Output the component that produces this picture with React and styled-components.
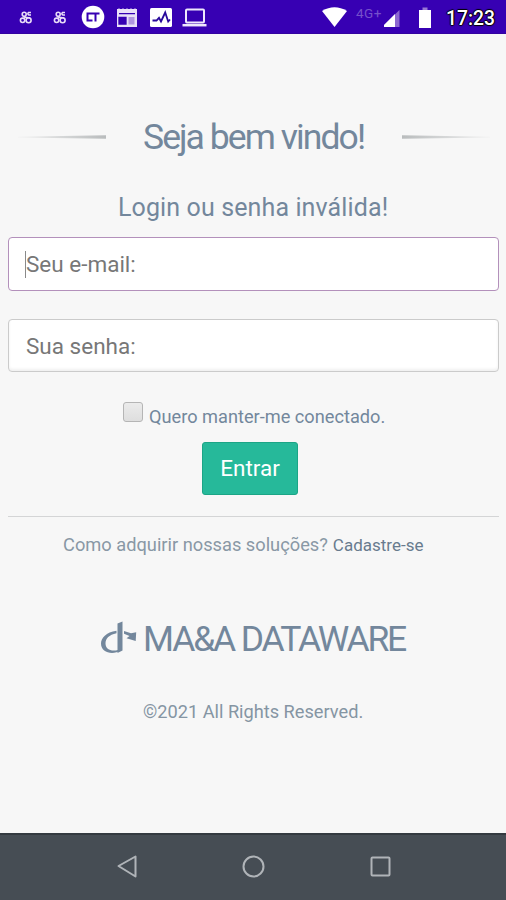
import React from "react";
import styled, { createGlobalStyle } from "styled-components";

const GlobalStyle = createGlobalStyle`
  * { box-sizing: border-box; }
  body { margin: 0; background: #f7f7f7; font-family: Roboto, "Liberation Sans", sans-serif; }
`;

const Screen = styled.div`
  display: flex;
  flex-direction: column;
  width: 506px;
  height: 900px;
  overflow: hidden;
  background: #f7f7f7;
  color: #73879c;
`;

const StatusBar = styled.header`
  display: flex;
  justify-content: space-between;
  height: 34px;
  flex: none;
  background: #3700b3;
  border-bottom: 1px solid #3303a0;
`;

const StatusIcons = styled.svg`
  display: block;
  height: 33px;
  width: ${(p) => p.$width}px;
`;

const StatusRight = styled.div`
  display: flex;
  padding-right: 10px;
`;

const Network = styled.span`
  width: 28px;
  margin: 6px 0 0 9px;
  font-size: 13.5px;
  line-height: 15px;
  letter-spacing: 0.5px;
  color: #7650cb;
  white-space: nowrap;
`;

const Clock = styled.time`
  margin-left: 13px;
  width: 50px;
  font-size: 19.3px;
  line-height: 37px;
  font-weight: 500;
  color: #fff;
  white-space: nowrap;
  text-shadow: 1px 0 1px #000, -1px 0 1px #000, 0 1px 1px #000, 0 -1px 1px #000;
`;

const Content = styled.main`
  display: flex;
  flex-direction: column;
  flex: 1;
  padding: 82px 7px 0 8px;
`;

const TitleRow = styled.div`
  display: flex;
  align-items: center;
  justify-content: space-between;
  height: 42px;
  padding: 0 9px 0 10px;
`;

const Title = styled.h1`
  margin: 0;
  width: 222px;
  font-size: 35.5px;
  line-height: 42px;
  font-weight: 400;
  letter-spacing: ${(p) => p.$spacing}px;
  white-space: nowrap;
`;

const TitleRule = styled.svg`
  width: 88px;
  height: 4px;
`;

const Message = styled.p`
  margin: 34px 0 0 110px;
  font-size: 25px;
  line-height: 32px;
  letter-spacing: 0.12px;
  white-space: nowrap;
`;

const Form = styled.form`
  display: flex;
  flex-direction: column;
`;

const Field = styled.input`
  width: 491px;
  height: ${(p) => (p.$active ? 54 : 53)}px;
  margin: ${(p) => p.$top}px 0 0;
  padding: 0 17px;
  border: 1.5px solid ${(p) => (p.$active ? "#b390bb" : "#cbcbcb")};
  border-radius: 4px;
  outline: none;
  background: #fff;
  box-shadow: ${(p) => (p.$active ? "none" : "inset 0 -2px 3px #f0f0f0")};
  font-family: inherit;
  font-size: 22.5px;
  &::placeholder { color: #777; opacity: 1; }
`;

const FieldWrap = styled.div`
  position: relative;
  display: flex;
`;

const Caret = styled.span`
  position: absolute;
  left: 17px;
  bottom: 13px;
  width: 1px;
  height: 27px;
  background: #8a8a8a;
`;

const Remember = styled.label`
  display: flex;
  height: 26px;
  margin: 30px 0 0 115px;
  font-size: 18.2px;
  line-height: 30px;
  white-space: nowrap;
`;

const CheckBox = styled.input`
  appearance: none;
  width: 20px;
  height: 20px;
  margin: 0 6px 0 0;
  border: 1.5px solid #b5b5b5;
  border-radius: 3px;
  background: linear-gradient(#ebebeb, #dedede);
`;

const Submit = styled.button`
  width: 96px;
  height: 53px;
  margin: 14px 0 0 194px;
  padding: 0 0 2px;
  border: 1px solid #1ca586;
  border-radius: 3px;
  background: #26b99a;
  color: #fff;
  font-family: inherit;
  font-size: 22.5px;
`;

const Divider = styled.hr`
  width: 491px;
  height: 1px;
  margin: 21px 0 0;
  border: 0;
  background: #d4d5d6;
`;

const SignUp = styled.p`
  display: flex;
  gap: 5px;
  margin: 17px 0 0 55px;
  font-size: 18.25px;
  line-height: 22px;
  white-space: nowrap;
  color: #8998a5;
`;

const SignUpLink = styled.a`
  color: #687b8e;
  font-size: 17px;
`;

const Brand = styled.div`
  display: flex;
  margin: 62px 0 0 92px;
`;

const BrandLogo = styled.svg`
  width: 43px;
  height: 42px;
`;

const Copyright = styled.p`
  margin: 40px 0 0 135px;
  font-size: 18.2px;
  line-height: 24px;
  color: #8595a3;
  white-space: nowrap;
`;

const NavBar = styled.nav`
  display: flex;
  justify-content: space-between;
  flex: none;
  height: 67px;
  padding: 19px 111px 0;
  background: #464d54;
  border-top: 2px solid #343a40;
`;

const NavIcon = styled.svg`
  width: 30px;
  height: 30px;
  fill: none;
  stroke: #b0b4b8;
  stroke-width: 2;
  stroke-linejoin: round;
`;

const Knot = ({ x }) => (
  <g transform={`translate(${x} 17.5)`} stroke="#e8dcf7" strokeWidth="1.6" fill="none">
    <circle cx="-1.800" cy="-3.300" r="2" />
    <path d="M5-5H2.500Q1-3.500 3-2.500H5M-2.500-.500L4 .500" />
    <circle cx="-3.400" cy="2.800" r="2.200" />
    <circle cx="2.600" cy="2.800" r="2.500" />
  </g>
);

export default function App() {
  return (
    <Screen>
      <GlobalStyle />
      <StatusBar>
        <StatusIcons $width={210} viewBox="0 0 210 33">
          <Knot x={26} />
          <Knot x={60} />
          <circle cx="93" cy="17" r="11.3" fill="#fff" />
          <path d="M93 13.500H87.500V20.500H92.500M91 13.500H99.500M95.500 13.500V21.500" fill="none" stroke="#3700b3" strokeWidth="2" />
          <path d="M117 9h20v18h-20z" fill="#e9e0f8" />
          <path d="M119 13.7h16M119 17.5h7v6.5h-7z" fill="#3700b3" stroke="#3700b3" strokeWidth="1.3" />
          <path d="M128.5 17h6v7.5h-6z" fill="#b096df" />
          <path d="M118 8.5h18" stroke="#7850ca" strokeDasharray="2 2" />
          <rect x="150" y="8" width="22" height="19" rx="1.5" fill="#fff" />
          <path d="M152.5 20.5h4l2.5-2.7 2 3.7 4.2-9 3 9 1.8-2" fill="none" stroke="#28089b" strokeWidth="1.8" />
          <rect x="186" y="9.5" width="18" height="13" rx="1" fill="none" stroke="#eee7fc" strokeWidth="2" />
          <path d="M182.5 25.2h24" stroke="#eee7fc" strokeWidth="2.5" />
        </StatusIcons>
        <StatusRight>
          <StatusIcons $width={25} viewBox="322 0 25 33">
            <path d="M322 11Q334.500 3.500 347 11L334.500 27Z" fill="#fff" />
          </StatusIcons>
          <Network>4G+</Network>
          <StatusIcons $width={49} viewBox="384 0 49 33">
            <path d="M399.500 10V27H382Z" fill="#8c67d1" />
            <path d="M395 14V27H382Z" fill="#fff" />
            <path d="M422.500 7.500h5v3h-5z" fill="#9878d4" />
            <path d="M419 10h12v18h-12z" fill="#fff" />
          </StatusIcons>
          <Clock>17:23</Clock>
        </StatusRight>
      </StatusBar>

      <Content>
        <TitleRow>
          <TitleRule viewBox="0 0 88 4">
            <defs>
              <linearGradient id="ruleLeft"><stop stopColor="#f2f2f2" /><stop offset="1" stopColor="#b9bcbd" /></linearGradient>
            </defs>
            <path d="M0 1.700L88 .3V3.700L0 2.500Z" fill="url(#ruleLeft)" />
          </TitleRule>
          <Title $spacing={-1.93}>Seja bem vindo!</Title>
          <TitleRule viewBox="0 0 88 4">
            <defs>
              <linearGradient id="ruleRight"><stop stopColor="#b9bcbd" /><stop offset="1" stopColor="#f2f2f2" /></linearGradient>
            </defs>
            <path d="M0 .3L88 1.700V2.500L0 3.700Z" fill="url(#ruleRight)" />
          </TitleRule>
        </TitleRow>
        <Form>
          <Message>Login ou senha inválida!</Message>
          <FieldWrap>
            <Field $active $top={13} type="email" placeholder="Seu e-mail:" />
            <Caret />
          </FieldWrap>
          <Field $top={28} type="password" placeholder="Sua senha:" />
          <Remember><CheckBox type="checkbox" />Quero manter-me conectado.</Remember>
          <Submit type="button">Entrar</Submit>
        </Form>
        <Divider />
        <SignUp>Como adquirir nossas soluções? <SignUpLink>Cadastre-se</SignUpLink></SignUp>
        <Brand>
          <BrandLogo viewBox="100 618 43 42">
            <path d="M117.500 623.500L122.500 621.500V650.500L117.500 653Z" fill="#73879c" />
            <path d="M116.500 630.800C106 632 101 638.500 101 643.500C101 652.500 112 655.500 121 650.500L118 650C111 652 105.500 649 105.500 643.500C105.500 638.500 109 635 116.500 633.300Z" fill="#73879c" />
            <path d="M124 631L131 633.200L136.200 632.200L135.700 641L126.500 638.200L129.500 636L124 633.800Z" fill="#73879c" />
          </BrandLogo>
          <Title $spacing={-2.15}>MA&amp;A DATAWARE</Title>
        </Brand>
        <Copyright>©2021 All Rights Reserved.</Copyright>
      </Content>

      <NavBar>
        <NavIcon viewBox="0 0 30 30"><path d="M7.500 13L24.500 3.500V23.500Z" transform="translate(0 -1)" /></NavIcon>
        <NavIcon viewBox="0 0 30 30"><circle cx="15.500" cy="12.500" r="10" /></NavIcon>
        <NavIcon viewBox="0 0 30 30"><rect x="6.500" y="3.500" width="18" height="18" rx="1" /></NavIcon>
      </NavBar>
    </Screen>
  );
}
